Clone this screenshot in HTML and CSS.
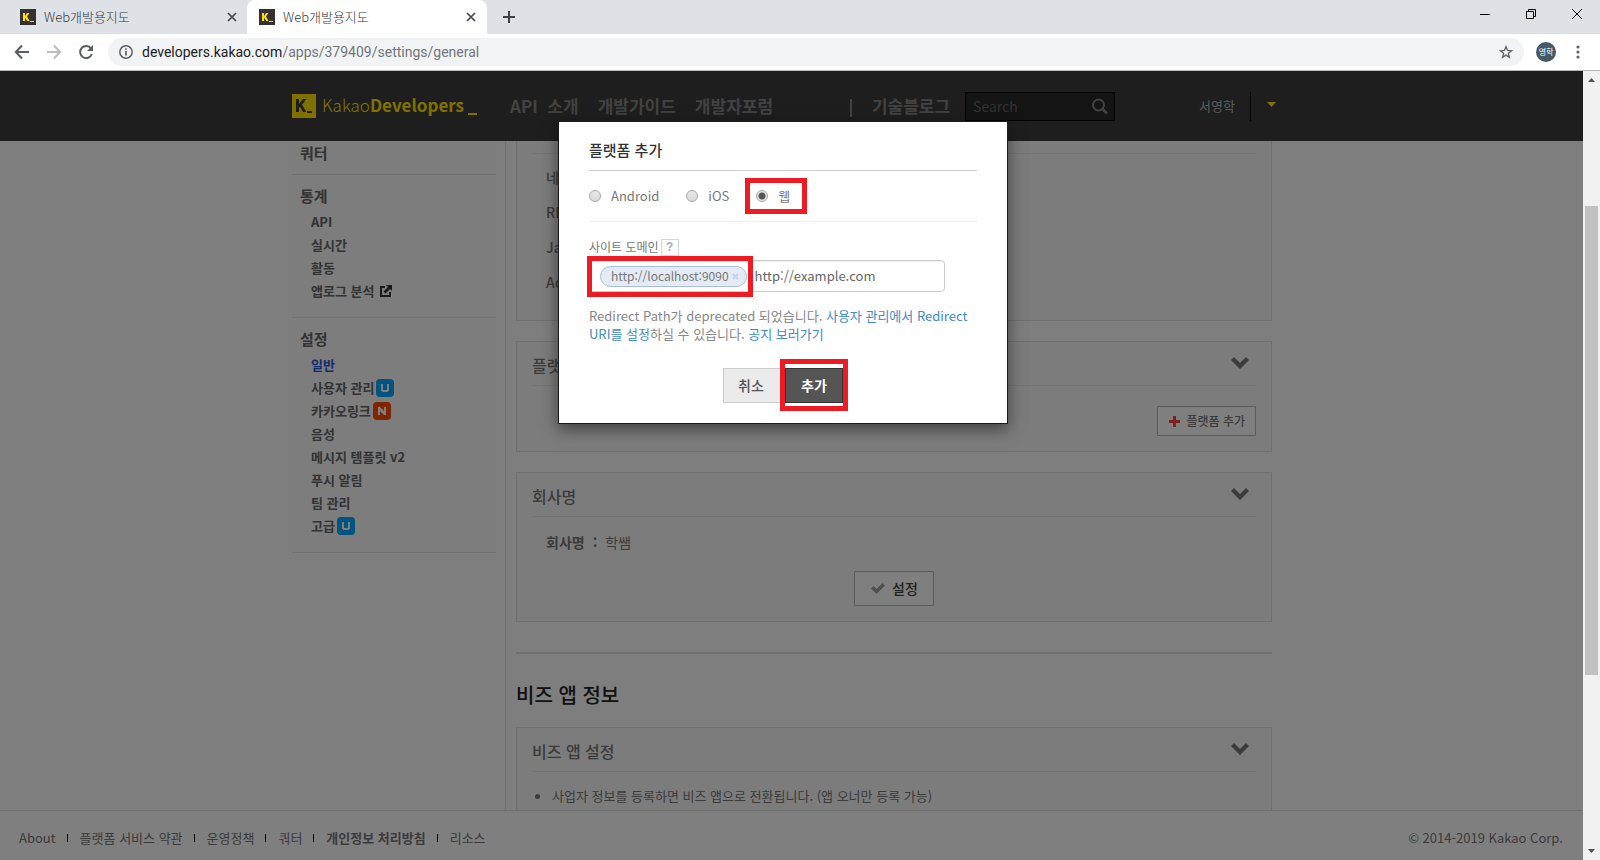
FILE: index.html
```html
<!DOCTYPE html>
<html lang="ko">
<head>
<meta charset="utf-8">
<title>Web개발용지도</title>
<link rel="stylesheet" href="styles.css">
</head>
<body>
<div class="tabstrip">
  <div class="tab">
    <svg class="favicon" viewBox="0 0 16 16" aria-hidden="true"><rect width="16" height="16" fill="#353131"/><path d="M3 4h2v3l2-3h2.400L7 7.500 9.600 12H7.200L5.500 9 5 9.700V12H3zM10 12h4v1h-4z" fill="#ffe000"/></svg>
    <span class="tab-title">Web개발용지도</span>
    <button class="icon-button" aria-label="탭 닫기"><svg width="10" height="10" viewBox="0 0 10 10"><path d="M1 1l8 8M9 1l-8 8" stroke="#45494d" stroke-width="1.700"/></svg></button>
  </div>
  <div class="tab tab-active">
    <svg class="favicon" viewBox="0 0 16 16" aria-hidden="true"><rect width="16" height="16" fill="#353131"/><path d="M3 4h2v3l2-3h2.400L7 7.500 9.600 12H7.200L5.500 9 5 9.700V12H3zM10 12h4v1h-4z" fill="#ffe000"/></svg>
    <span class="tab-title">Web개발용지도</span>
    <button class="icon-button" aria-label="탭 닫기"><svg width="10" height="10" viewBox="0 0 10 10"><path d="M1 1l8 8M9 1l-8 8" stroke="#45494d" stroke-width="1.700"/></svg></button>
  </div>
  <button class="icon-button new-tab" aria-label="새 탭"><svg width="12" height="12" viewBox="0 0 12 12"><path d="M6 0v12M0 6h12" stroke="#3c4043" stroke-width="2"/></svg></button>
  <div class="window-controls">
    <button class="icon-button" aria-label="최소화"><svg width="10" height="10" viewBox="0 0 10 10"><path d="M0 5.500h10" stroke="#000"/></svg></button>
    <button class="icon-button" aria-label="이전 크기로"><svg width="10" height="10" viewBox="0 0 10 10"><path d="M.5 2.500h7v7h-7zM2.500 2V.5h7v7H8" fill="none" stroke="#000"/></svg></button>
    <button class="icon-button" aria-label="닫기"><svg width="10" height="10" viewBox="0 0 10 10"><path d="M0 0l10 10M10 0L0 10" stroke="#000"/></svg></button>
  </div>
</div>
<div class="toolbar">
  <button class="icon-button" aria-label="뒤로"><svg width="16" height="16" viewBox="0 0 16 16"><path d="M15 8H2M8 1.500L1.800 8 8 14.500" fill="none" stroke="#5a5e62" stroke-width="2"/></svg></button>
  <button class="icon-button" aria-label="앞으로"><svg width="16" height="16" viewBox="0 0 16 16"><path d="M1 8h13M8 1.500L14.200 8 8 14.500" fill="none" stroke="#babcbe" stroke-width="2"/></svg></button>
  <button class="icon-button" aria-label="새로고침"><svg width="16" height="16" viewBox="0 0 16 16"><path d="M13 4.600A6 6 0 1 0 13.800 10" fill="none" stroke="#5a5e62" stroke-width="2"/><path d="M15 1v6H9z" fill="#5a5e62"/></svg></button>
  <div class="omnibox">
    <svg width="14" height="14" viewBox="0 0 14 14" aria-hidden="true"><circle cx="7" cy="7" r="6.200" fill="none" stroke="#5f6368" stroke-width="1.500"/><path d="M7 6v4.500M7 3.200v1.600" stroke="#5f6368" stroke-width="1.700"/></svg>
    <span class="url">developers.kakao.com<span class="url-path">/apps/379409/settings/general</span></span>
    <button class="icon-button" aria-label="북마크"><svg width="14" height="14" viewBox="0 0 14 14"><path d="M7 1.600l1.500 3.800 4.100.3-3.200 2.600 1 4L7 10.100l-3.400 2.200 1-4L1.400 5.700l4.100-.3z" fill="none" stroke="#5f6368" stroke-width="1.300"/></svg></button>
  </div>
  <span class="avatar">영학</span>
  <button class="icon-button" aria-label="메뉴"><svg width="4" height="14" viewBox="0 0 4 14"><g fill="#5f6368"><circle cx="2" cy="2" r="1.600"/><circle cx="2" cy="7" r="1.600"/><circle cx="2" cy="12" r="1.600"/></g></svg></button>
</div>
<div class="viewport">
  <div class="page">
    <header class="site-header">
      <div class="container header-row">
        <a class="logo" href="#">
          <svg width="24" height="24" viewBox="0 0 24 24" aria-hidden="true"><rect width="24" height="24" fill="#ffe000"/><path d="M4 5h3v5l4-5h3.200L10 10.700 14.400 18H11L8 12.800 7 14v4H4zM15 17h5v2h-5z" fill="#3c3c3c"/></svg>
          <span>Kakao<b>Developers</b></span><i class="logo-dash"></i>
        </a>
        <nav class="main-nav">
          <a href="#">API&nbsp; 소개</a>
          <a href="#">개발가이드</a>
          <a href="#">개발자포럼</a>
        </nav>
        <i class="nav-bar"></i>
        <a class="blog" href="#">기술블로그</a>
        <form class="search">
          <input type="search" placeholder="Search" aria-label="Search">
          <svg width="16" height="17" viewBox="0 0 16 17" aria-hidden="true"><circle cx="6.500" cy="7" r="5.500" fill="none" stroke="#858585" stroke-width="2"/><path d="M10.500 11l4.500 4.500" stroke="#858585" stroke-width="2.500"/></svg>
        </form>
        <a class="user" href="#">서영학</a>
        <button class="user-menu" aria-label="사용자 메뉴"><svg width="9" height="5" viewBox="0 0 9 5"><path d="M0 0h9L4.500 5z" fill="#ffe000"/></svg></button>
      </div>
    </header>
    <div class="content">
      <div class="container columns">
        <aside class="sidebar">
          <section><h3>쿼터</h3></section>
          <section>
            <h3>통계</h3>
            <ul>
              <li><a href="#">API</a></li>
              <li><a href="#">실시간</a></li>
              <li><a href="#">활동</a></li>
              <li><a href="#">앱로그 분석</a><svg class="external" width="12" height="12" viewBox="0 0 12 12" aria-hidden="true"><path d="M5 2H1v9h9V7" fill="none" stroke="#353535" stroke-width="2"/><path d="M6 0h6v6l-2-2-4.500 4.500-2-2L8 2z" fill="#353535"/></svg></li>
            </ul>
          </section>
          <section>
            <h3>설정</h3>
            <ul>
              <li><a class="current" href="#">일반</a></li>
              <li><a href="#">사용자 관리</a><svg class="badge" viewBox="0 0 18 18" aria-label="업데이트"><rect width="18" height="18" rx="4" fill="#00a8ff"/><path d="M5 5h2v6h4V5h2v7h-1v1H6v-1H5z" fill="#fff"/></svg></li>
              <li><a href="#">카카오링크</a><svg class="badge" viewBox="0 0 18 18" aria-label="새 항목"><rect width="18" height="18" rx="4" fill="#ff4a00"/><path d="M5 13V5h2l4 4V5h2v8h-2L7 9v4z" fill="#fff"/></svg></li>
              <li><a href="#">음성</a></li>
              <li><a href="#">메시지 템플릿 v2</a></li>
              <li><a href="#">푸시 알림</a></li>
              <li><a href="#">팀 관리</a></li>
              <li><a href="#">고급</a><svg class="badge" viewBox="0 0 18 18" aria-label="업데이트"><rect width="18" height="18" rx="4" fill="#00a8ff"/><path d="M5 5h2v6h4V5h2v7h-1v1H6v-1H5z" fill="#fff"/></svg></li>
            </ul>
          </section>
        </aside>
        <main class="main">
          <section class="card card-keys">
            <ul class="keys"><li>네이티브</li><li>REST</li><li>Java</li><li>Admin</li></ul>
          </section>
          <section class="card">
            <div class="card-head"><h2>플랫폼</h2><button class="toggle" aria-label="접기"><svg width="18" height="12" viewBox="0 0 18 12"><path d="M0 3l3-3 6 6 6-6 3 3-9 9z" fill="#777"/></svg></button></div>
            <div class="card-body platform-body">
              <button class="add-platform"><svg width="11" height="11" viewBox="0 0 11 11" aria-hidden="true"><path d="M4 0h3v4h4v3H7v4H4V7H0V4h4z" fill="#fd4343"/></svg>플랫폼 추가</button>
            </div>
          </section>
          <section class="card">
            <div class="card-head"><h2>회사명</h2><button class="toggle" aria-label="접기"><svg width="18" height="12" viewBox="0 0 18 12"><path d="M0 3l3-3 6 6 6-6 3 3-9 9z" fill="#777"/></svg></button></div>
            <div class="card-body">
              <p class="company"><b>회사명</b><b>:</b><span>학쌤</span></p>
              <button class="save"><svg width="14" height="11" viewBox="0 0 14 11" aria-hidden="true"><path d="M0 5.500l2.500-2.500L5.500 6l6-6L14 2.500 5.500 11z" fill="#a0a0a0"/></svg>설정</button>
            </div>
          </section>
          <h1 class="section-title">비즈 앱 정보</h1>
          <section class="card">
            <div class="card-head"><h2>비즈 앱 설정</h2><button class="toggle" aria-label="접기"><svg width="18" height="12" viewBox="0 0 18 12"><path d="M0 3l3-3 6 6 6-6 3 3-9 9z" fill="#777"/></svg></button></div>
            <ul class="notes"><li>사업자 정보를 등록하면 비즈 앱으로 전환됩니다. (앱 오너만 등록 가능)</li></ul>
          </section>
        </main>
      </div>
    </div>
    <footer class="site-footer">
      <nav class="footer-nav">
        <a href="#">About</a>
        <a href="#">플랫폼 서비스 약관</a>
        <a href="#">운영정책</a>
        <a href="#">쿼터</a>
        <a class="strong" href="#">개인정보 처리방침</a>
        <a href="#">리소스</a>
      </nav>
      <span>© 2014-2019 Kakao Corp.</span>
    </footer>
    <div class="backdrop">
      <form class="modal" role="dialog" aria-labelledby="modal-title">
        <h4 class="modal-title" id="modal-title">플랫폼 추가</h4>
        <div class="platforms">
          <label><input type="radio" name="platform">Android</label>
          <label><input type="radio" name="platform">iOS</label>
          <label class="mark mark-web"><input type="radio" name="platform" checked>웹</label>
        </div>
        <div class="domain-label"><label for="domain">사이트 도메인</label><button type="button" class="help">?</button></div>
        <div class="domain-box">
          <span class="mark mark-tag"><span class="tag">http://localhost:9090<button type="button" aria-label="삭제"><svg width="7" height="7" viewBox="0 0 7 7"><path d="M1 1l5 5M6 1L1 6" stroke="#c3d3ea" stroke-width="2"/></svg></button></span></span>
          <input id="domain" type="text" placeholder="http://example.com">
        </div>
        <p class="hint">Redirect Path가 deprecated 되었습니다. <a href="#">사용자 관리에서 Redirect URI를 설정</a>하실 수 있습니다. <a href="#">공지 보러가기</a></p>
        <div class="actions">
          <button type="button" class="cancel">취소</button>
          <span class="mark mark-add"><button type="button" class="add">추가</button></span>
        </div>
      </form>
    </div>
  </div>
  <div class="scrollbar" aria-hidden="true">
    <svg width="7" height="4" viewBox="0 0 7 4"><path d="M0 4h7L3.500 0z" fill="#505050"/></svg>
    <div class="track"><i class="thumb"></i></div>
    <svg width="7" height="4" viewBox="0 0 7 4"><path d="M0 0h7L3.500 4z" fill="#505050"/></svg>
  </div>
</div>
</body>
</html>
```
FILE: styles.css
```css
* { box-sizing: border-box; }
body {
  margin: 0;
  height: 100vh;
  display: flex;
  flex-direction: column;
  overflow: hidden;
  background: #fff;
  color: #777;
  font: 13px/20px "Noto Sans CJK KR", sans-serif;
}
h1, h2, h3, h4, p, ul { margin: 0; padding: 0; }
ul { list-style: none; }
a { color: inherit; text-decoration: none; }
button, input { font: inherit; color: inherit; margin: 0; }
button { padding: 0; border: 0; background: none; }
svg { flex: none; display: block; }

/* browser window */
.tabstrip { display: flex; height: 34px; background: #dee1e6; }
.tab { display: flex; align-items: center; width: 240px; padding: 0 11px 0 12px; color: #35393d; }
.tab:first-child { width: 239px; margin-left: 8px; padding-right: 10px; }
.tab-active { background: #fff; border-radius: 8px 8px 0 0; }
.favicon { width: 16px; height: 16px; }
.tab-title { flex: 1; margin-left: 8px; font-size: 13px; font-weight: 300; }
.icon-button { display: flex; align-items: center; justify-content: center; }
.new-tab { width: 44px; }
.window-controls { display: flex; margin-left: auto; height: 28px; }
.window-controls button { width: 46px; }
.toolbar { display: flex; align-items: center; height: 37px; padding: 0 20px 0 14px; border-bottom: 1px solid #b6b8b9; gap: 16px; }
.omnibox { flex: 1; display: flex; align-items: center; height: 28px; margin: 0 -4px 0 -2px; padding: 0 11px; border-radius: 14px; background: #f1f3f4; }
.url { flex: 1; margin-left: 9px; font-family: Roboto, sans-serif; font-size: 14px; color: #202124; }
.url-path { color: #73777b; }
.avatar { width: 20px; height: 20px; border-radius: 50%; background: #455a64; color: #fff; font-size: 8px; text-align: center; }
.toolbar > .icon-button:last-child { margin-left: 4px; }
.viewport { flex: 1; display: flex; min-height: 0; }
.scrollbar { display: flex; flex-direction: column; align-items: center; width: 17px; padding: 7px 0; background: #f1f1f1; }
.track { flex: 1; width: 13px; padding-top: 124px; }
.thumb { display: block; height: 73%; background: #c1c1c1; }

/* page */
.page { position: relative; flex: 1; display: flex; flex-direction: column; min-width: 0; overflow: hidden; background: #fdfdfd; }
.container { max-width: 999px; margin: 0 auto; padding-right: 19px; }
.site-header { background: #3c3c3c; }
.header-row { display: flex; align-items: center; height: 70px; color: #858585; }
.logo { display: flex; align-items: center; width: 218px; color: #ffe000; font-size: 17px; font-weight: 300; }
.logo span { margin: 0 0 2px 6px; }
.logo b { font-weight: 700; }
.logo-dash { width: 9px; height: 2px; margin: 16px 0 0 4px; background: #ffe000; }
.main-nav { display: flex; gap: 19px; }
.main-nav, .blog { font-size: 17px; font-weight: 700; }
.nav-bar { width: 2px; height: 18px; margin: 4px 20px 0 auto; background: #858585; }
.search { display: flex; align-items: center; width: 150px; height: 29px; margin-left: 15px; padding: 0 6px 0 7px; border: 1px solid #000; background: #282828; }
.search input { flex: 1; min-width: 0; padding: 0; border: 0; outline: 0; background: none; font-size: 14px; }
.search input::placeholder { color: #666; opacity: 1; }
.user { margin-left: 84px; color: #b8b8b8; }
.user-menu { display: flex; align-items: center; height: 29px; margin: 0 -4px 0 15px; padding: 0 0 3px 16px; border-left: 1px solid #000; }

.content { flex: 1; min-height: 0; overflow: hidden; }
.columns { display: flex; gap: 10px; }
.sidebar { flex: none; width: 214px; height: 100vh; padding-right: 9px; border-right: 1px solid #e2e2e2; color: #666; }
.sidebar section { padding: 10px 8px 15px; border-bottom: 1px solid #e0e0e0; background: #fafafa; }
.sidebar section:first-child { padding: 1px 8px 10px; }
.sidebar h3 { font-size: 15px; line-height: 22px; font-weight: 700; }
.sidebar ul { padding: 3px 0 0 11px; }
.sidebar li { display: flex; align-items: center; height: 23px; font-weight: 700; }
.current { color: #1f5fd6; }
.external { margin-left: 6px; }
.badge { width: 18px; height: 18px; margin-left: 2px; }

.main { flex: 1; min-width: 0; }
.card { margin-bottom: 20px; padding: 0 15px; border: 1px solid #dedede; background: #f9f9f9; }
.card-keys { padding-top: 12px; padding-bottom: 20px; border-top: 0; }
.keys { padding: 6px 14px 0; border-top: 1px solid #e9e9e9; }
.keys li { height: 35px; line-height: 35px; font-size: 14px; font-weight: 500; }
.card-head { display: flex; align-items: center; justify-content: space-between; height: 44px; padding-top: 2px; border-bottom: 1px solid #e9e9e9; }
.card-head h2 { font-size: 16px; font-weight: 500; }
.toggle { margin: 0 7px 4px 0; }
.platform-body { display: flex; justify-content: flex-end; padding: 20px 0 15px; }
.add-platform, .save { display: flex; align-items: center; border: 1px solid #b5b5b5; border-radius: 1px; background: #fff; font-weight: 500; }
.add-platform { height: 30px; padding: 0 10px 0 11px; gap: 6px; font-size: 12px; }
.company { display: flex; gap: 8px; padding: 15px 14px 0; font-size: 14px; }
.company b { font-weight: 700; }
.save { height: 35px; margin: 19px auto 15px; padding: 0 15px 1px 16px; gap: 7px; font-size: 14px; color: #444; }
.section-title { margin-top: 30px; padding: 26px 0 17px; border-top: 2px solid #dedede; color: #222; font-size: 20px; line-height: 30px; font-weight: 500; }
.notes { padding: 14px 0 30px 20px; }
.notes li { display: flex; align-items: center; }
.notes li::before { content: ""; width: 5px; height: 5px; margin: 0 12px 0 -17px; border-radius: 50%; background: #777; }

.site-footer { display: flex; justify-content: space-between; height: 50px; padding: 5px 20px 0 19px; align-items: center; border-top: 1px solid #dedede; background: #fff; }
.footer-nav { display: flex; }
.footer-nav a { display: flex; align-items: center; }
.footer-nav a + a::before { content: ""; width: 1px; height: 8px; margin: 0 12px 0 11px; background: #000; }
.strong { font-weight: 700; }

/* dialog */
.backdrop { position: absolute; inset: 0; padding: 50px 17px 0 0; background: rgba(0, 0, 0, 0.5); }
.modal { width: 450px; margin: 0 auto; padding: 15px 30px 20px; border: 1px solid #1c1c1c; background: #fff; box-shadow: 0 5px 15px rgba(0, 0, 0, 0.5); }
.modal-title { padding: 1px 0 9px; border-bottom: 1px solid #ccc; color: #333; font-size: 15px; line-height: 23px; font-weight: 500; }
.platforms { display: flex; gap: 27px; height: 51px; align-items: center; border-bottom: 1px solid #eee; }
.platforms label { display: flex; align-items: center; }
.platforms input { appearance: none; width: 12px; height: 12px; margin-right: 10px; border: 1px solid #a9a9a9; border-radius: 50%; background: linear-gradient(#e8e8e8, #dadada); }
.platforms input:checked { background: radial-gradient(circle, #555 3px, #e2e2e2 4px); }
.domain-label { display: flex; align-items: center; gap: 2px; padding-top: 16px; font-size: 12px; line-height: 18px; }
.help { width: 18px; height: 17px; border: 1px solid #d6d6d6; color: #aaa; font: 700 12px/15px "Liberation Sans", sans-serif; }
.domain-box { display: flex; align-items: center; width: 356px; height: 32px; margin-top: 4px; padding-left: 10px; border: 1px solid #ccc; border-radius: 4px; box-shadow: inset 0 1px 1px rgba(0, 0, 0, 0.07); }
.domain-box input { flex: 1; min-width: 0; margin-left: 8px; padding: 0; border: 0; outline: 0; background: none; }
.domain-box input::placeholder { color: #666; opacity: 1; }
.tag { display: flex; align-items: center; gap: 3px; height: 21px; padding: 0 7px 0 10px; border: 1px solid #a5bfe0; border-radius: 11px; background: #e4ebf5; font-size: 12px; }
.hint { margin-top: 15px; color: #888; line-height: 18px; }
.hint a { color: #428bca; }
.actions { display: flex; justify-content: center; margin-top: 25px; font-size: 14px; }
.cancel, .add { height: 35px; padding-bottom: 2px; }
.cancel { width: 62px; padding-right: 6px; border: 1px solid #ccc; background: #ebebeb; color: #555; font-weight: 500; }
.add { display: block; width: 58px; border: 1px solid #333; background: #555; color: #fff; font-weight: 700; }
.mark { position: relative; }
.mark::after { content: ""; position: absolute; border: 5px solid #ed1c24; pointer-events: none; }
.mark-web::after { inset: -8px -17px -8px -11px; }
.mark-tag::after { inset: -10px -6px -10px -13px; }
.mark-add::after { inset: -9px -5px -8px; }
```
